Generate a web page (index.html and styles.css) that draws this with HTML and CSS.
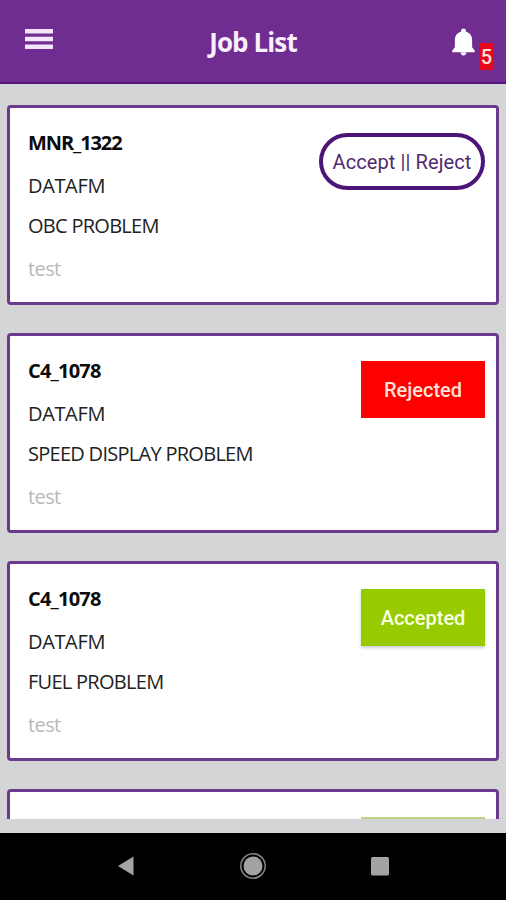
FILE: index.html
```html
<!DOCTYPE html>
<html lang="en">
<head>
<meta charset="utf-8">
<title>Job List</title>
<link rel="stylesheet" href="styles.css">
</head>
<body>
<div class="app">
  <header class="bar">
    <svg class="menu" viewBox="0 0 28 22"><path d="M0 1h28v4.500H0zM0 8.700h28v4.500H0zM0 16.400h28v4.500H0z"/></svg>
    <h1 class="heading">Job List</h1>
    <div class="alerts">
      <svg class="bell" viewBox="0 0 24 28"><path d="M12 0c1.500 0 2.600 1.100 2.600 2.600v.7c4.300 1.200 6.400 4.500 6.400 8.700v7.500l2.700 3.300v1.800H.3v-1.800L3 19.500V12c0-4.200 2.100-7.500 6.400-8.700v-.7C9.400 1.100 10.500 0 12 0zM9 25h6c0 1.700-1.300 3-3 3s-3-1.300-3-3z"/></svg>
      <span class="count">5</span>
    </div>
  </header>
  <main class="list">
    <article class="card">
      <div class="info">
        <h2 class="code code-long">MNR_1322</h2>
        <p class="client">DATAFM</p>
        <p class="issue">OBC PROBLEM</p>
        <p class="note">test</p>
      </div>
      <button class="status choice">Accept || Reject</button>
    </article>
    <article class="card">
      <div class="info">
        <h2 class="code">C4_1078</h2>
        <p class="client">DATAFM</p>
        <p class="issue">SPEED DISPLAY PROBLEM</p>
        <p class="note">test</p>
      </div>
      <button class="status rejected">Rejected</button>
    </article>
    <article class="card">
      <div class="info">
        <h2 class="code">C4_1078</h2>
        <p class="client">DATAFM</p>
        <p class="issue">FUEL PROBLEM</p>
        <p class="note">test</p>
      </div>
      <button class="status accepted">Accepted</button>
    </article>
    <article class="card">
      <div class="info"></div>
      <div class="status accepted faded"></div>
    </article>
  </main>
  <nav class="nav">
    <svg class="key" viewBox="0 0 28 28"><path d="M6 14L21.500 4.500v19z"/></svg>
    <svg class="key" viewBox="0 0 28 28"><circle cx="14" cy="14" r="9.500"/><circle class="ring" cx="14" cy="14" r="12.200"/></svg>
    <svg class="key" viewBox="0 0 28 28"><rect x="5" y="5" width="18" height="18.500" rx="1.500"/></svg>
  </nav>
</div>
</body>
</html>
```
FILE: styles.css
```css
* { box-sizing: border-box; }
body { margin: 0; font-family: "Open Sans", "Noto Sans", sans-serif; }
h1, h2, p { margin: 0; }
.app {
  width: 506px;
  height: 900px;
  display: flex;
  flex-direction: column;
  background: #d3d5d7;
  overflow: hidden;
}
.bar {
  height: 84px;
  flex: none;
  display: grid;
  grid-template-columns: 100px 1fr 100px;
  align-items: center;
  background: #6f2c91;
  border-bottom: 2px solid #59187c;
  color: #fff;
}
.menu { width: 28px; height: 22px; margin: -4px 0 0 25px; fill: #f7e6fb; }
.heading {
  font-size: 26px;
  line-height: 36px;
  padding-top: 2px;
  font-weight: 700;
  letter-spacing: -0.9px;
  text-align: center;
  color: #fbeefd;
}
.alerts { display: flex; align-items: flex-start; justify-content: flex-end; gap: 5px; padding-right: 13px; height: 56px; padding-top: 15px; }
.bell { width: 23px; height: 28px; fill: #fff; }
.count {
  width: 13px;
  height: 27px;
  margin-top: 15px;
  background: #e6091c;
  color: #ffe3d8;
  font: 500 20px/29px Roboto, sans-serif;
  text-align: center;
}
.list {
  height: 735px;
  flex: none;
  padding: 21px 7px 0 7px;
  display: flex;
  flex-direction: column;
  gap: 28px;
  overflow: hidden;
}
.card {
  height: 200px;
  flex: none;
  display: flex;
  justify-content: space-between;
  align-items: flex-start;
  padding: 20px 11px 0 18px;
  background: #fff;
  border: 3px solid #6b3a8c;
  border-radius: 4px;
}
.info { color: #222; font-size: 20px; white-space: nowrap; }
.code { font-size: 20px; line-height: 30px; font-weight: 700; color: #0c0c0c; letter-spacing: -0.8px; }
.code-long { letter-spacing: -1.1px; }
.client { line-height: 30px; margin-top: 13px; letter-spacing: -0.35px; }
.issue { line-height: 30px; margin-top: 10px; letter-spacing: -0.72px; }
.note { line-height: 30px; margin-top: 13px; color: #b9b9b9; font-weight: 500; letter-spacing: -0.6px; }
.status {
  width: 124px;
  height: 57px;
  margin-top: 5px;
  padding: 0;
  border: 0;
  font: 500 20px/59px Roboto, sans-serif;
  text-align: center;
  white-space: nowrap;
}
.choice {
  width: 166px;
  border: 4px solid #4d1478;
  border-radius: 29px;
  background: #fff;
  color: #4f2c6e;
  font-weight: 400;
  letter-spacing: 0.1px;
  line-height: 51px;
}
.rejected { background: #fe0000; color: #ffe1d6; }
.accepted { background: #97cb00; color: #f8ffe2; box-shadow: 0 2px 3px #0003; }
.faded { background: #c2d283; box-shadow: none; }
.nav {
  height: 67px;
  flex: none;
  margin-top: 14px;
  display: flex;
  justify-content: center;
  gap: 99px;
  padding-top: 19px;
  background: #000;
}
.key { width: 28px; height: 28px; fill: #a3a3a3; }
.ring { fill: none; stroke: #858585; stroke-width: 1.5; }
```
